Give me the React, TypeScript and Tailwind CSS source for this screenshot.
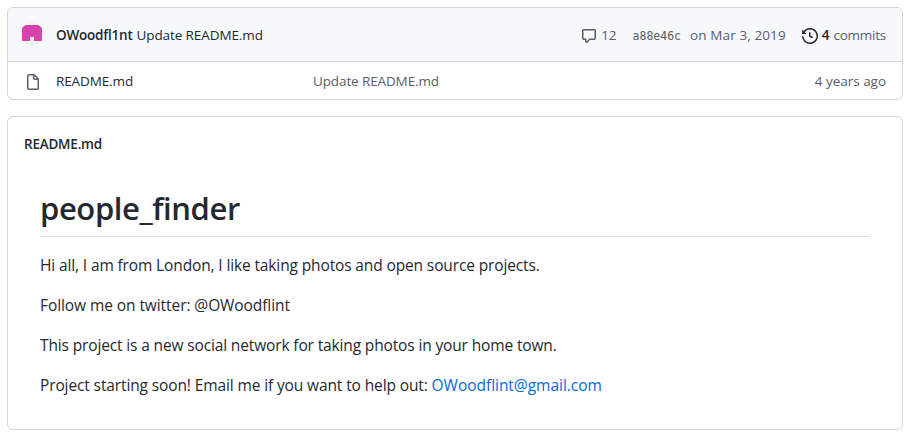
const sans = "font-['Open_Sans','Noto_Sans',sans-serif]";

function CommentIcon() {
  return (
    <svg width="16" height="16" viewBox="0 0 16 16" fill="#57606a" className="shrink-0">
      <path fillRule="evenodd" d="M2.75 2.5a.25.25 0 00-.25.25v7.5c0 .138.112.25.25.25h2a.75.75 0 01.75.75v2.19l2.72-2.72a.75.75 0 01.53-.22h4.5a.25.25 0 00.25-.25v-7.5a.25.25 0 00-.25-.25H2.75zM1 2.75C1 1.784 1.784 1 2.75 1h10.5c.966 0 1.75.784 1.75 1.75v7.5A1.75 1.75 0 0113.25 12H9.06l-2.573 2.573A1.457 1.457 0 014 13.543V12H2.75A1.75 1.75 0 011 10.25v-7.5z" />
    </svg>
  );
}

function HistoryIcon() {
  return (
    <svg width="16" height="16" viewBox="0 0 16 16" fill="#24292f" className="shrink-0">
      <path fillRule="evenodd" d="M1.643 3.143L.427 1.927A.25.25 0 000 2.104V5.75c0 .138.112.25.25.25h3.646a.25.25 0 00.177-.427L2.715 4.215a6.5 6.5 0 11-1.18 4.458.75.75 0 10-1.493.154 8.001 8.001 0 101.6-5.684zM7.75 4a.75.75 0 01.75.75v2.992l2.028.812a.75.75 0 01-.557 1.392l-2.5-1A.75.75 0 017 8.25v-3.5A.75.75 0 017.75 4z" />
    </svg>
  );
}

function FileIcon() {
  return (
    <svg width="16" height="16" viewBox="0 0 16 16" fill="#57606a" className="shrink-0">
      <path fillRule="evenodd" d="M3.75 1.5a.25.25 0 00-.25.25v12.5c0 .138.112.25.25.25h8.5a.25.25 0 00.25-.25V6H9.75A1.75 1.75 0 018 4.25V1.5H3.75zm5.75.56v2.19c0 .138.112.25.25.25h2.19L9.5 2.06zM2 1.75C2 .784 2.784 0 3.75 0h5.086c.464 0 .909.184 1.237.513l3.414 3.414c.329.328.513.773.513 1.237v9.086A1.75 1.75 0 0112.25 16h-8.5A1.75 1.75 0 012 14.25V1.75z" />
    </svg>
  );
}

function Avatar() {
  return (
    <svg width="24" height="24" viewBox="0 0 24 24" className="shrink-0">
      <defs>
        <clipPath id="round">
          <circle cx="12" cy="12.5" r="11.5" />
        </clipPath>
      </defs>
      <g clipPath="url(#round)">
        <rect width="24" height="24" fill="#f0f0f0" />
        <path d="M2 3h20v16h-8v-4h-4v4H2z" fill="#d843ae" />
      </g>
    </svg>
  );
}

export default function App() {
  return (
    <div className={`h-[441px] w-[912px] bg-white pt-[7px] pr-[9px] pl-[7px] text-[#24292f] ${sans}`}>
      <section className="overflow-hidden rounded-md border border-[#d0d7de] text-[13.5px] leading-[20px] whitespace-nowrap">
        <header className="flex h-[54px] items-start border-b border-[#d0d7de] bg-[#f6f8fa] pt-[14px] pr-4 pl-3">
          <Avatar />
          <div className="mt-[3px] ml-[12px] flex gap-1">
            <span className="font-semibold tracking-[-0.2px]">OWoodfl1nt</span>
            <span className="tracking-[-0.1px]">Update README.md</span>
          </div>
          <div className="mt-[3px] ml-auto flex items-start text-[#57606a]">
            <span className="mt-[3px]"><CommentIcon /></span>
            <span className="ml-1">12</span>
            <span className="mt-px ml-4 font-['DejaVu_Sans_Mono',monospace] text-[11.5px]">a88e46c</span>
            <span className="ml-[9px] tracking-[0.11px]">on Mar 3, 2019</span>
            <span className="mt-[3px] ml-4"><HistoryIcon /></span>
            <span className="ml-1 font-semibold text-[#24292f]">4</span>
            <span className="ml-1 tracking-[-0.25px]">commits</span>
          </div>
        </header>
        <div className="flex h-[37px] items-start pt-[9px] pr-4 pl-[16.5px]">
          <span className="mt-[3px]"><FileIcon /></span>
          <span className="ml-[15.5px] w-[257px] tracking-[-0.12px]">README.md</span>
          <span className="tracking-[-0.12px] text-[#57606a]">Update README.md</span>
          <span className="ml-auto tracking-[-0.03px] text-[#57606a]">4 years ago</span>
        </div>
      </section>

      <section className="mt-4 h-[314px] rounded-md border border-[#d0d7de] px-4 pt-[17px]">
        <h2 className="text-[13.5px] leading-[20px] font-semibold tracking-[-0.22px]">README.md</h2>
        <article className="px-4 pt-[34px] text-[15.5px] leading-[24px]">
          <h1 className="mb-4 h-[49px] border-b border-[#d8dee4] text-[31px] leading-[40px] font-semibold tracking-[-0.4px]">people_finder</h1>
          <p className="mb-4 tracking-[-0.13px]">Hi all, I am from London, I like taking photos and open source projects.</p>
          <p className="mb-4 tracking-[-0.08px]">Follow me on twitter: @OWoodflint</p>
          <p className="mb-4 tracking-[-0.14px]">This project is a new social network for taking photos in your home town.</p>
          <p className="tracking-[-0.12px]">
            Project starting soon! Email me if you want to help out:{" "}
            <a className="tracking-[-0.03px] text-[#0969da]">OWoodflint@gmail.com</a>
          </p>
        </article>
      </section>
    </div>
  );
}
